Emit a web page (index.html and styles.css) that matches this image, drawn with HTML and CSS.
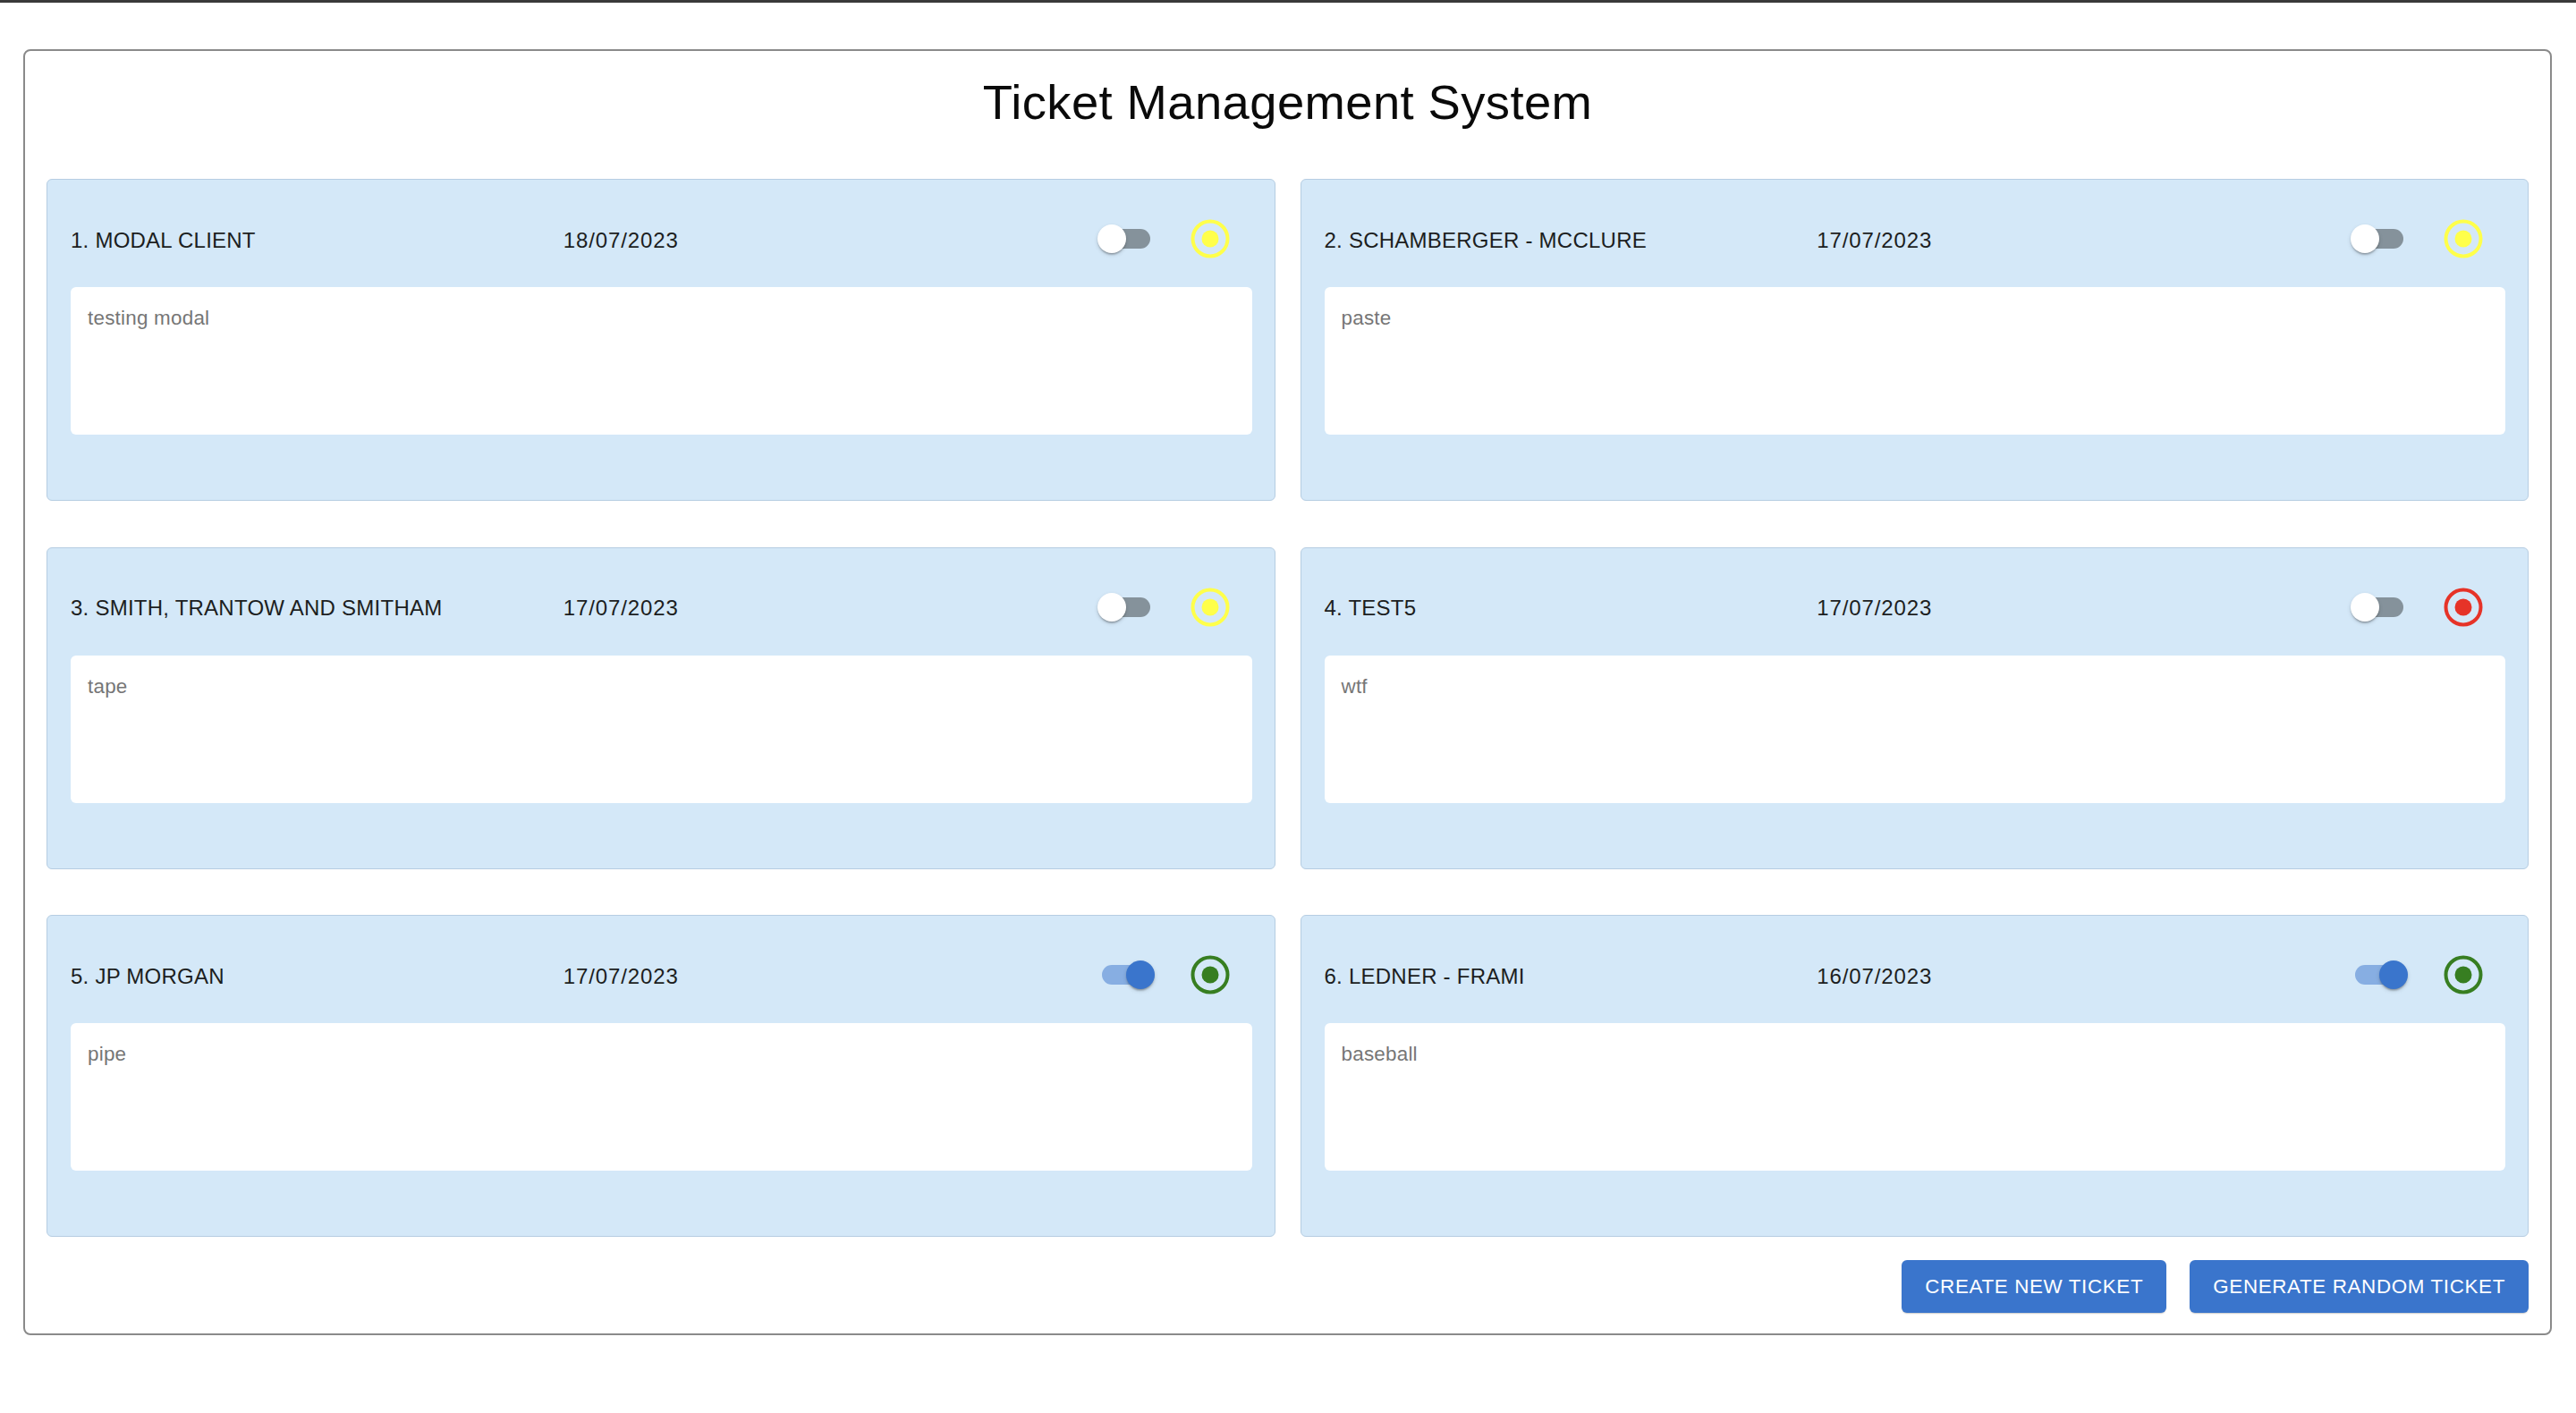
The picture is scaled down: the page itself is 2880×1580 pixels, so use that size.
FILE: index.html
```html
<!DOCTYPE html>
<html lang="en">
<head>
<meta charset="utf-8">
<title>Ticket Management System</title>
<link rel="stylesheet" href="styles.css">
</head>
<body>
<div class="topbar"></div>
<div class="page">
  <main class="panel">
    <h1 class="heading">Ticket Management System</h1>
    <section class="grid">
      <article class="card">
        <div class="card-head">
          <span class="name">1. Modal Client</span>
          <span class="date">18/07/2023</span>
          <span class="switch"><span class="track"></span><span class="thumb"></span></span>
          <svg class="radio yellow" viewBox="0 0 52 52"><circle cx="26" cy="26" r="19.5" fill="none" stroke="currentColor" stroke-width="4"/><circle cx="26" cy="26" r="9.5" fill="currentColor"/></svg>
        </div>
        <div class="desc">testing modal</div>
      </article>
      <article class="card">
        <div class="card-head">
          <span class="name">2. Schamberger - McClure</span>
          <span class="date">17/07/2023</span>
          <span class="switch"><span class="track"></span><span class="thumb"></span></span>
          <svg class="radio yellow" viewBox="0 0 52 52"><circle cx="26" cy="26" r="19.5" fill="none" stroke="currentColor" stroke-width="4"/><circle cx="26" cy="26" r="9.5" fill="currentColor"/></svg>
        </div>
        <div class="desc">paste</div>
      </article>
      <article class="card">
        <div class="card-head">
          <span class="name">3. Smith, Trantow and Smitham</span>
          <span class="date">17/07/2023</span>
          <span class="switch"><span class="track"></span><span class="thumb"></span></span>
          <svg class="radio yellow" viewBox="0 0 52 52"><circle cx="26" cy="26" r="19.5" fill="none" stroke="currentColor" stroke-width="4"/><circle cx="26" cy="26" r="9.5" fill="currentColor"/></svg>
        </div>
        <div class="desc">tape</div>
      </article>
      <article class="card">
        <div class="card-head">
          <span class="name">4. test5</span>
          <span class="date">17/07/2023</span>
          <span class="switch"><span class="track"></span><span class="thumb"></span></span>
          <svg class="radio red" viewBox="0 0 52 52"><circle cx="26" cy="26" r="19.5" fill="none" stroke="currentColor" stroke-width="4"/><circle cx="26" cy="26" r="9.5" fill="currentColor"/></svg>
        </div>
        <div class="desc">wtf</div>
      </article>
      <article class="card">
        <div class="card-head">
          <span class="name">5. JP Morgan</span>
          <span class="date">17/07/2023</span>
          <span class="switch on"><span class="track"></span><span class="thumb"></span></span>
          <svg class="radio green" viewBox="0 0 52 52"><circle cx="26" cy="26" r="19.5" fill="none" stroke="currentColor" stroke-width="4"/><circle cx="26" cy="26" r="9.5" fill="currentColor"/></svg>
        </div>
        <div class="desc">pipe</div>
      </article>
      <article class="card">
        <div class="card-head">
          <span class="name">6. Ledner - Frami</span>
          <span class="date">16/07/2023</span>
          <span class="switch on"><span class="track"></span><span class="thumb"></span></span>
          <svg class="radio green" viewBox="0 0 52 52"><circle cx="26" cy="26" r="19.5" fill="none" stroke="currentColor" stroke-width="4"/><circle cx="26" cy="26" r="9.5" fill="currentColor"/></svg>
        </div>
        <div class="desc">baseball</div>
      </article>
    </section>
    <div class="actions">
      <button class="btn" type="button">Create new ticket</button>
      <button class="btn" type="button">Generate random ticket</button>
    </div>
  </main>
</div>
</body>
</html>
```

FILE: styles.css
```css
* { box-sizing: border-box; }

html, body {
  margin: 0;
  padding: 0;
  background: #ffffff;
  font-family: "Liberation Sans", Arial, Helvetica, sans-serif;
  color: rgba(0, 0, 0, 0.87);
}

.topbar {
  height: 3px;
  background: #3a3a3a;
}

.page {
  padding: 52px 27px 0 26px;
}

.panel {
  border: 2px solid #8a8a8a;
  border-radius: 8px;
  padding: 24px 24px 23px 24px;
}

.heading {
  margin: 0 0 52px 0;
  text-align: center;
  font-weight: 400;
  font-size: 54.4px;
  line-height: 67px;
  letter-spacing: 0.4px;
  color: #0a0a0a;
}

.grid {
  display: grid;
  grid-template-columns: 1fr 1fr;
  column-gap: 28px;
  row-gap: 51.5px;
}

.card {
  height: 360px;
  background: #d4e8f8;
  border: 1px solid #b6cde2;
  border-radius: 6px;
  padding: 40px 25px 0 26px;
}

.card-head {
  display: flex;
  align-items: center;
  height: 52px;
  margin-bottom: 28px;
}

.name {
  width: 41.7%;
  flex: none;
  padding-top: 3px;
  font-size: 24px;
  letter-spacing: 0.24px;
  text-transform: uppercase;
  white-space: nowrap;
  color: #1c1e21;
}

.date {
  flex: 1;
  padding-top: 3px;
  font-size: 24px;
  letter-spacing: 0.9px;
  color: #1c1e21;
}

.switch {
  position: relative;
  width: 64px;
  height: 32px;
  flex: none;
  margin-left: 1px;
}

.switch .track {
  position: absolute;
  left: 5px;
  top: 5px;
  width: 54px;
  height: 22px;
  border-radius: 11px;
  background: #85929b;
}

.switch .thumb {
  position: absolute;
  left: 0;
  top: 0;
  width: 32px;
  height: 32px;
  border-radius: 50%;
  background: #ffffff;
  box-shadow: 0 3px 2px -2px rgba(0,0,0,0.2), 0 2px 2px 0 rgba(0,0,0,0.14), 0 2px 5px 0 rgba(0,0,0,0.12);
}

.switch.on .track { background: #87aee2; }
.switch.on .thumb { left: 32px; background: #3a75cc; }

.radio {
  width: 52px;
  height: 52px;
  flex: none;
  margin-left: 36px;
  margin-right: 21px;
}

.radio.yellow { color: #ffff4a; }
.radio.red { color: #e63328; }
.radio.green { color: #377e21; }

.desc {
  height: 165px;
  background: #ffffff;
  border-radius: 6px;
  padding: 19px 19px;
  font-size: 22.4px;
  line-height: 32px;
  letter-spacing: 0.24px;
  color: #767676;
}

.actions {
  display: flex;
  justify-content: flex-end;
  gap: 26px;
  margin-top: 26px;
}

.btn {
  height: 59px;
  padding: 0 26px;
  border: none;
  border-radius: 6px;
  background: #3a75cc;
  color: #ffffff;
  font-family: "Liberation Sans", Arial, Helvetica, sans-serif;
  font-size: 22.4px;
  letter-spacing: 0.64px;
  text-transform: uppercase;
  box-shadow: 0 2px 1px -1px rgba(0,0,0,0.12), 0 1px 2px 0 rgba(0,0,0,0.1);
}
```
